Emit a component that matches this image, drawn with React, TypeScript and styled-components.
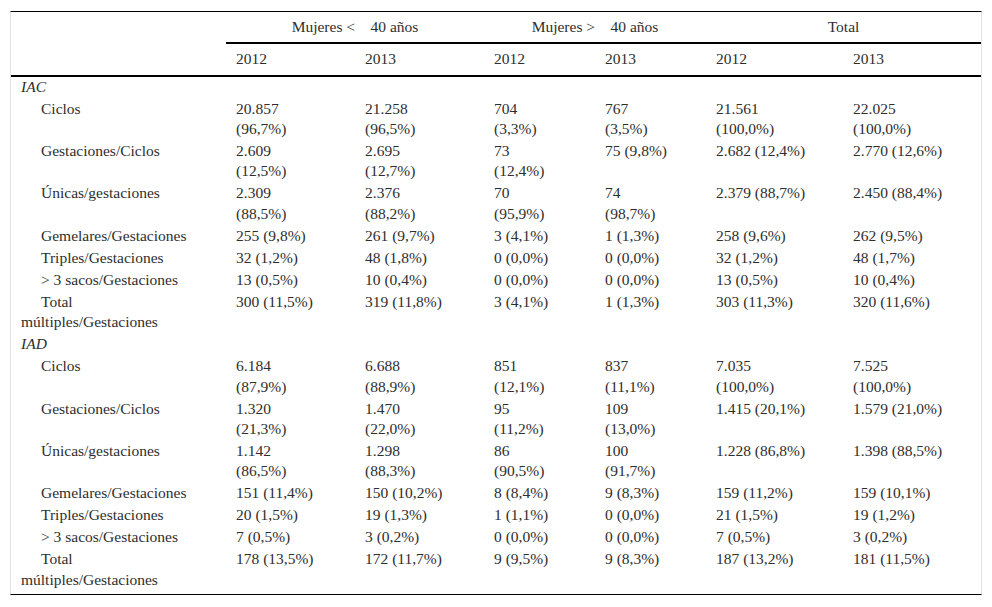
import React from "react";
import styled, { createGlobalStyle } from "styled-components";

const Global = createGlobalStyle`
  html, body { margin: 0; padding: 0; background: #fff; }
  body { font-family: "Liberation Serif", "Times New Roman", serif; color: #2e2e2e; }
`;

const Page = styled.div`
  padding: 11px 10px 0 10px;
`;

const Frame = styled.div`
  width: 972px;
  box-sizing: border-box;
  border-top: 1px solid #000;
  border-bottom: 1px solid #000;
  border-left: 1px solid #e4e4e4;
  border-right: 1px solid #e4e4e4;
  padding-bottom: 2px;
`;

const Table = styled.table`
  width: 100%;
  border-collapse: collapse;
  table-layout: fixed;
  font-family: "Liberation Serif", "Times New Roman", serif;
  font-size: 15.5px;
  line-height: 20.3px;
  color: #2e2e2e;
`;

const Head = styled.thead`
  border-bottom: 2px solid #000;
`;

const GroupCell = styled.th`
  font-weight: normal;
  text-align: center;
  padding: 5px 10px 5px 10px;
  border-bottom: 2px solid #000;
  white-space: nowrap;
`;

const YearCell = styled.th`
  font-weight: normal;
  text-align: left;
  padding: 5px 10px 5px 10px;
`;

const BlankCell = styled.th`
  padding: 0;
`;

const SectionCell = styled.td`
  font-style: italic;
  padding: 0 10px 1.75px 10px;
`;

const LabelCell = styled.td<{ $indent?: boolean }>`
  padding: 0 36px 1.75px 10px;
  text-indent: ${(p) => (p.$indent ? "20px" : "0")};
  vertical-align: top;
`;

const ValueCell = styled.td`
  padding: 0 36px 1.75px 10px;
  vertical-align: top;
`;

const widths = [215, 129, 129, 111, 111, 137, 138];

type Row = { label: string; values: string[] };
type Section = { name: string; rows: Row[] };

const sections: Section[] = [
  {
    name: "IAC",
    rows: [
      { label: "Ciclos", values: ["20.857 (96,7%)", "21.258 (96,5%)", "704 (3,3%)", "767 (3,5%)", "21.561 (100,0%)", "22.025 (100,0%)"] },
      { label: "Gestaciones/Ciclos", values: ["2.609 (12,5%)", "2.695 (12,7%)", "73 (12,4%)", "75 (9,8%)", "2.682 (12,4%)", "2.770 (12,6%)"] },
      { label: "Únicas/gestaciones", values: ["2.309 (88,5%)", "2.376 (88,2%)", "70 (95,9%)", "74 (98,7%)", "2.379 (88,7%)", "2.450 (88,4%)"] },
      { label: "Gemelares/Gestaciones", values: ["255 (9,8%)", "261 (9,7%)", "3 (4,1%)", "1 (1,3%)", "258 (9,6%)", "262 (9,5%)"] },
      { label: "Triples/Gestaciones", values: ["32 (1,2%)", "48 (1,8%)", "0 (0,0%)", "0 (0,0%)", "32 (1,2%)", "48 (1,7%)"] },
      { label: "> 3 sacos/Gestaciones", values: ["13 (0,5%)", "10 (0,4%)", "0 (0,0%)", "0 (0,0%)", "13 (0,5%)", "10 (0,4%)"] },
      { label: "Total múltiples/Gestaciones", values: ["300 (11,5%)", "319 (11,8%)", "3 (4,1%)", "1 (1,3%)", "303 (11,3%)", "320 (11,6%)"] },
    ],
  },
  {
    name: "IAD",
    rows: [
      { label: "Ciclos", values: ["6.184 (87,9%)", "6.688 (88,9%)", "851 (12,1%)", "837 (11,1%)", "7.035 (100,0%)", "7.525 (100,0%)"] },
      { label: "Gestaciones/Ciclos", values: ["1.320 (21,3%)", "1.470 (22,0%)", "95 (11,2%)", "109 (13,0%)", "1.415 (20,1%)", "1.579 (21,0%)"] },
      { label: "Únicas/gestaciones", values: ["1.142 (86,5%)", "1.298 (88,3%)", "86 (90,5%)", "100 (91,7%)", "1.228 (86,8%)", "1.398 (88,5%)"] },
      { label: "Gemelares/Gestaciones", values: ["151 (11,4%)", "150 (10,2%)", "8 (8,4%)", "9 (8,3%)", "159 (11,2%)", "159 (10,1%)"] },
      { label: "Triples/Gestaciones", values: ["20 (1,5%)", "19 (1,3%)", "1 (1,1%)", "0 (0,0%)", "21 (1,5%)", "19 (1,2%)"] },
      { label: "> 3 sacos/Gestaciones", values: ["7 (0,5%)", "3 (0,2%)", "0 (0,0%)", "0 (0,0%)", "7 (0,5%)", "3 (0,2%)"] },
      { label: "Total múltiples/Gestaciones", values: ["178 (13,5%)", "172 (11,7%)", "9 (9,5%)", "9 (8,3%)", "187 (13,2%)", "181 (11,5%)"] },
    ],
  },
];

const years = ["2012", "2013", "2012", "2013", "2012", "2013"];

export default function App() {
  return (
    <>
      <Global />
      <Page>
        <Frame>
          <Table>
            <colgroup>
              {widths.map((w, i) => (
                <col key={i} style={{ width: w }} />
              ))}
            </colgroup>
            <Head>
              <tr>
                <BlankCell rowSpan={2} />
                <GroupCell colSpan={2}>Mujeres &lt;{"\u2003"}40 años</GroupCell>
                <GroupCell colSpan={2}>Mujeres &gt;{"\u2003"}40 años</GroupCell>
                <GroupCell colSpan={2}>Total</GroupCell>
              </tr>
              <tr>
                {years.map((y, i) => (
                  <YearCell key={i}>{y}</YearCell>
                ))}
              </tr>
            </Head>
            {sections.map((s) => (
              <tbody key={s.name}>
                <tr>
                  <SectionCell colSpan={7}>{s.name}</SectionCell>
                </tr>
                {s.rows.map((r) => (
                  <tr key={r.label}>
                    <LabelCell $indent>{r.label}</LabelCell>
                    {r.values.map((v, i) => (
                      <ValueCell key={i}>{v}</ValueCell>
                    ))}
                  </tr>
                ))}
              </tbody>
            ))}
          </Table>
        </Frame>
      </Page>
    </>
  );
}
